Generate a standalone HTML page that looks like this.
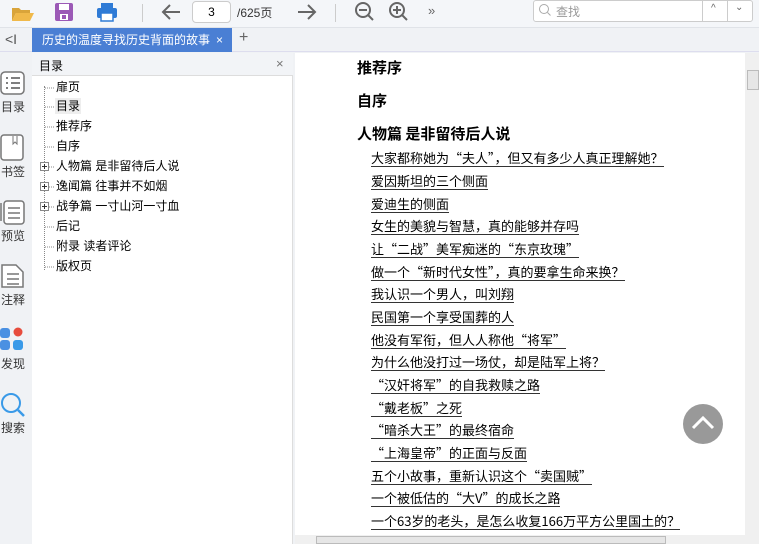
<!DOCTYPE html>
<html><head><meta charset="utf-8"><style>
*{margin:0;padding:0;box-sizing:border-box}
body{width:759px;height:544px;overflow:hidden;background:#f0f2f5;font-family:"Liberation Sans","Noto Sans CJK SC",sans-serif;position:relative;color:#000}
.a{position:absolute}
.toc div{position:absolute;left:56px;font-size:12px;line-height:16px}
.c div{position:absolute;font-size:13px;line-height:17px;white-space:nowrap;font-family:"Noto Sans CJK SC",sans-serif}
.c .h{left:357px;font-size:15px;font-weight:bold}
.c .i{left:371px;border-bottom:1px solid #333;line-height:16px}
.sb{position:absolute;left:0;width:31px;text-align:center;font-size:12px;color:#333}
</style></head><body>
<div class="a" style="left:0;top:0;width:759px;height:28px;background:#f4f6f9;border-bottom:1px solid #e0e3e8"></div>
<svg class="a" style="left:10px;top:3px" width="26" height="20"><path d="M2 5h7l2 2h9v3H6L2 18z" fill="#d9a43a"/><path d="M6 10h18l-4 8H2z" fill="#f0b94a"/></svg>
<svg class="a" style="left:54px;top:2px" width="20" height="20"><rect x="1" y="1" width="18" height="18" rx="2" fill="#9b59b6"/><rect x="5" y="2" width="10" height="6" fill="#fff"/><rect x="6" y="12" width="8" height="6" fill="#fff"/><rect x="8" y="13" width="4" height="4" fill="#9b59b6"/></svg>
<svg class="a" style="left:96px;top:2px" width="22" height="20"><rect x="5" y="1" width="12" height="5" fill="#2f7bd6"/><rect x="1" y="6" width="20" height="10" rx="2" fill="#2f7bd6"/><rect x="5" y="11" width="12" height="8" fill="#fff" stroke="#2f7bd6" stroke-width="1.5"/></svg>
<div class="a" style="left:142px;top:4px;width:1px;height:18px;background:#ccc"></div>
<svg class="a" style="left:160px;top:2px" width="22" height="20"><path d="M20 10H3M10 3L3 10l7 7" stroke="#666" stroke-width="2" fill="none"/></svg>
<div class="a" style="left:192px;top:1px;width:39px;height:22px;border:1px solid #ccc;border-radius:4px;background:#fff;font-size:12px;text-align:center;line-height:20px">3</div>
<div class="a" style="left:237px;top:4px;font-size:12px;color:#333">/625页</div>
<svg class="a" style="left:296px;top:2px" width="22" height="20"><path d="M2 10h17M12 3l7 7-7 7" stroke="#666" stroke-width="2" fill="none"/></svg>
<div class="a" style="left:335px;top:4px;width:1px;height:18px;background:#ccc"></div>
<svg class="a" style="left:353px;top:0" width="24" height="24"><circle cx="10" cy="10" r="7" stroke="#666" stroke-width="2" fill="none"/><path d="M6 10h8M15 15l5 5" stroke="#666" stroke-width="2"/></svg>
<svg class="a" style="left:387px;top:0" width="24" height="24"><circle cx="10" cy="10" r="7" stroke="#666" stroke-width="2" fill="none"/><path d="M6 10h8M10 6v8M15 15l5 5" stroke="#666" stroke-width="2"/></svg>
<div class="a" style="left:428px;top:3px;font-size:13px;color:#666">»</div>
<div class="a" style="left:533px;top:0;width:220px;height:22px;border:1px solid #ccc;border-radius:3px;background:#fff"></div>
<svg class="a" style="left:538px;top:3px" width="14" height="14"><circle cx="6" cy="6" r="4.5" stroke="#aaa" fill="none"/><path d="M9.5 9.5l3 3" stroke="#aaa"/></svg>
<div class="a" style="left:556px;top:3px;font-size:12px;color:#999">查找</div>
<div class="a" style="left:702px;top:0;width:1px;height:22px;background:#ccc"></div>
<div class="a" style="left:727px;top:0;width:1px;height:22px;background:#ccc"></div>
<div class="a" style="left:711px;top:3px;font-size:10px;color:#666">^</div>
<div class="a" style="left:735px;top:2px;font-size:10px;color:#666">⌄</div>
<div class="a" style="left:0;top:28px;width:759px;height:24px;background:#f0f2f5;border-bottom:1px solid #dde"></div>
<div class="a" style="left:5px;top:31px;font-size:14px;color:#555">&lt;I</div>
<div class="a" style="left:32px;top:28px;width:200px;height:24px;background:#4a7fd4;color:#fff;font-size:12px;line-height:24px;padding-left:10px;white-space:nowrap;overflow:hidden">历史的温度寻找历史背面的故事<span style="position:absolute;left:184px">×</span></div>
<div class="a" style="left:239px;top:29px;font-size:16px;color:#666">+</div>
<svg class="a" style="left:0;top:70px" width="26" height="26"><rect x="1" y="2" width="23" height="22" rx="4" stroke="#777" stroke-width="1.5" fill="#fff"/><path d="M6 8h2M11 8h9M6 13h2M11 13h9M6 18h2M11 18h9" stroke="#555" stroke-width="1.5"/></svg>
<div class="sb" style="top:98px;width:26px">目录</div>
<svg class="a" style="left:0;top:134px" width="26" height="28"><rect x="1" y="1" width="22" height="25" rx="3" stroke="#777" stroke-width="1.5" fill="#fff"/><path d="M13 2v8l2-2 2 2V2" stroke="#777" fill="none"/></svg>
<div class="sb" style="top:163px;width:26px">书签</div>
<svg class="a" style="left:0;top:198px" width="26" height="28"><rect x="4" y="3" width="20" height="23" rx="3" stroke="#777" stroke-width="1.5" fill="#fff"/><path d="M1 5v18M8 10h12M8 15h12M8 20h12" stroke="#777" stroke-width="1.5"/></svg>
<div class="sb" style="top:227px;width:26px">预览</div>
<svg class="a" style="left:0;top:262px" width="26" height="28"><path d="M2 3h14l7 7v15H2z" stroke="#777" stroke-width="1.5" fill="#fff"/><path d="M7 12h12M7 17h12M7 22h12" stroke="#777" stroke-width="1.5"/></svg>
<div class="sb" style="top:291px;width:26px">注释</div>
<svg class="a" style="left:0;top:326px" width="26" height="26"><rect x="0" y="2" width="10" height="10" rx="3" fill="#4a90e2"/><circle cx="18" cy="6" r="4.5" fill="#e74c3c"/><rect x="0" y="14" width="10" height="10" rx="3" fill="#4a90e2"/><rect x="13" y="14" width="10" height="10" rx="3" fill="#3a9ae8"/></svg>
<div class="sb" style="top:355px;width:26px">发现</div>
<svg class="a" style="left:0;top:392px" width="26" height="26"><circle cx="11" cy="11" r="9" stroke="#3a9ae8" stroke-width="2" fill="none"/><path d="M18 18l6 6" stroke="#3a9ae8" stroke-width="2.5"/></svg>
<div class="sb" style="top:419px;width:26px">搜索</div>
<div class="a" style="left:32px;top:53px;width:261px;height:491px;background:#fff;border-right:1px solid #ddd"></div>
<div class="a" style="left:32px;top:53px;width:261px;height:23px;background:#f2f4f7;border-bottom:1px solid #ddd"></div>
<div class="a" style="left:39px;top:57px;font-size:12px">目录</div>
<div class="a" style="left:276px;top:56px;font-size:13px;color:#777">×</div>
<div class="a" style="left:44px;top:86px;width:0;height:184px;border-left:1px dotted #888"></div>
<div class="toc">
<div style="top:79px">扉页</div>
<div style="top:98px;background:#eee;padding:0 1px;left:55px">目录</div>
<div style="top:118px">推荐序</div>
<div style="top:138px">自序</div>
<div style="top:158px">人物篇 是非留待后人说</div>
<div style="top:178px">逸闻篇 往事并不如烟</div>
<div style="top:198px">战争篇 一寸山河一寸血</div>
<div style="top:218px">后记</div>
<div style="top:238px">附录 读者评论</div>
<div style="top:258px">版权页</div>
</div>
<svg class="a" style="left:39px;top:86px" width="16" height="184"><g stroke="#888" stroke-dasharray="1 1"><path d="M6 2h10M6 21h10M6 41h10M6 61h10M10 81h6M10 101h6M10 121h6M6 141h10M6 161h10M6 181h10"/></g><g fill="#fff" stroke="#888"><rect x="1.5" y="76.5" width="8" height="8"/><rect x="1.5" y="96.5" width="8" height="8"/><rect x="1.5" y="116.5" width="8" height="8"/></g><path d="M3 80.5h5M5.5 78v5M3 100.5h5M5.5 98v5M3 120.5h5M5.5 118v5" stroke="#333"/></svg>
<div class="a" style="left:295px;top:53px;width:450px;height:482px;background:#fff"></div>
<div class="a" style="left:745px;top:53px;width:14px;height:482px;background:#f0f0f0"></div>
<div class="a" style="left:747px;top:70px;width:12px;height:20px;background:#e6e6e6;border:1px solid #bbb"></div>
<div class="a" style="left:295px;top:535px;width:464px;height:9px;background:#f0f0f0"></div>
<div class="a" style="left:316px;top:536px;width:350px;height:8px;background:#e6e6e6;border:1px solid #bbb"></div>
<div class="c">
<div class="h" style="top:59px">推荐序</div>
<div class="h" style="top:92px">自序</div>
<div class="h" style="top:125px">人物篇 是非留待后人说</div>
<div class="i" style="top:150px">大家都称她为“夫人”，但又有多少人真正理解她？</div>
<div class="i" style="top:173px">爱因斯坦的三个侧面</div>
<div class="i" style="top:196px">爱迪生的侧面</div>
<div class="i" style="top:218px">女生的美貌与智慧，真的能够并存吗</div>
<div class="i" style="top:241px">让“二战”美军痴迷的“东京玫瑰”</div>
<div class="i" style="top:264px">做一个“新时代女性”，真的要拿生命来换？</div>
<div class="i" style="top:286px">我认识一个男人，叫刘翔</div>
<div class="i" style="top:309px">民国第一个享受国葬的人</div>
<div class="i" style="top:332px">他没有军衔，但人人称他“将军”</div>
<div class="i" style="top:354px">为什么他没打过一场仗，却是陆军上将？</div>
<div class="i" style="top:377px">“汉奸将军”的自我救赎之路</div>
<div class="i" style="top:400px">“戴老板”之死</div>
<div class="i" style="top:422px">“暗杀大王”的最终宿命</div>
<div class="i" style="top:445px">“上海皇帝”的正面与反面</div>
<div class="i" style="top:468px">五个小故事，重新认识这个“卖国贼”</div>
<div class="i" style="top:490px">一个被低估的“大V”的成长之路</div>
<div class="i" style="top:513px">一个63岁的老头，是怎么收复166万平方公里国土的？</div>
</div>
<svg class="a" style="left:683px;top:404px" width="40" height="40"><circle cx="20" cy="20" r="20" fill="#999"/><path d="M10 24l10-10 10 10" stroke="#fff" stroke-width="3" fill="none"/></svg>
</body></html>
